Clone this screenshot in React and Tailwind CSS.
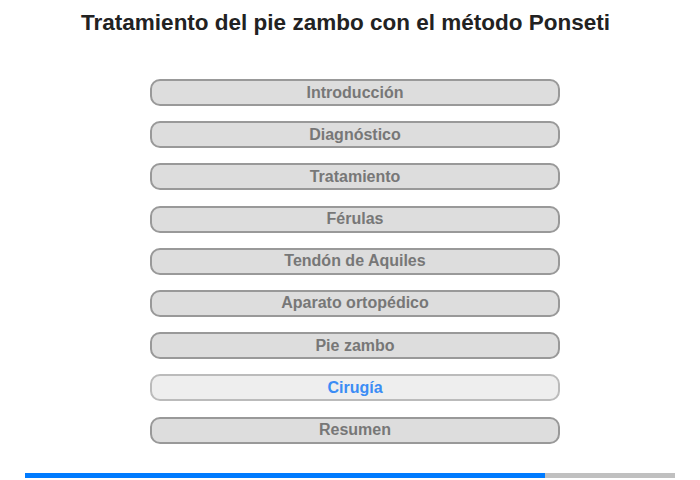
import React from "react";

const sections = [
  "Introducción",
  "Diagnóstico",
  "Tratamiento",
  "Férulas",
  "Tendón de Aquiles",
  "Aparato ortopédico",
  "Pie zambo",
  "Cirugía",
  "Resumen",
];

const App = () => {
  const active = "Cirugía";
  const progress = 80;

  return (
    <div className="w-[700px] h-[480px] bg-white font-['Liberation_Sans',Arial,sans-serif] flex flex-col items-center">
      <h1 className="mt-[10px] mr-[9px] text-[22.5px] leading-[26px] font-bold text-[#222]">
        Tratamiento del pie zambo con el método Ponseti
      </h1>

      <div className="mt-[43px] ml-[10px] flex flex-col gap-[15.2px]">
        {sections.map((s) => (
          <button
            key={s}
            className={`w-[410px] h-[27px] rounded-[10px] border-2 text-[16px] leading-[20px] font-bold ${
              s === active
                ? "bg-[#eeeeee] border-[#bbbbbb] text-[#3b8cf5]"
                : "bg-[#dddddd] border-[#999999] text-[#777777]"
            }`}
          >
            {s}
          </button>
        ))}
      </div>

      {/* progress */}
      <div className="mt-[29px] w-[650px] h-[5px] bg-[#c0c0c0]">
        <div className="h-full bg-[#007bff]" style={{ width: `${progress}%` }}></div>
      </div>
    </div>
  );
};

export default App;
